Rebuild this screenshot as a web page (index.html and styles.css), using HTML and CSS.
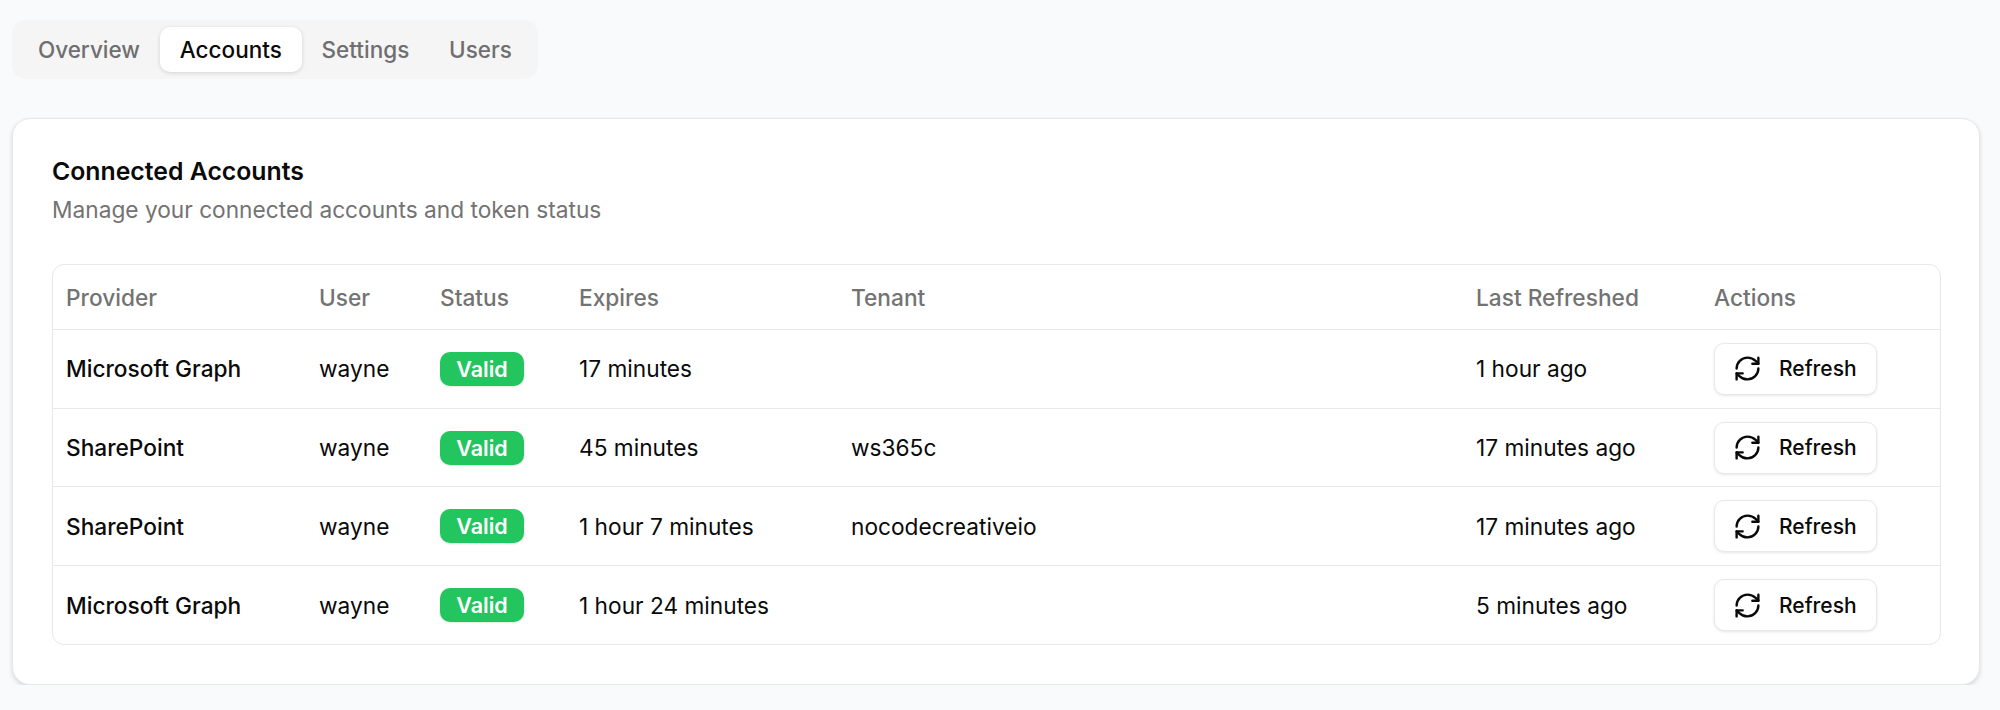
FILE: index.html
```html
<!DOCTYPE html>
<html>

<head>
    <link rel="stylesheet" href="styles.css">

    <title>
        Connected Accounts
    </title>
</head>

<body>

    <div class="page">
        <nav class="tabs">
            <a class="tab">Overview</a>
            <a class="tab tab_active">Accounts</a>
            <a class="tab">Settings</a>
            <a class="tab">Users</a>
        </nav>

        <section class="card">
            <h2 class="card_title">Connected Accounts</h2>
            <p class="card_subtitle">Manage your connected accounts and token status</p>

            <div class="table_wrap">
                <table>
                    <colgroup>
                        <col class="col_provider">
                        <col class="col_user">
                        <col class="col_status">
                        <col class="col_expires">
                        <col class="col_tenant">
                        <col class="col_refreshed">
                        <col class="col_actions">
                    </colgroup>
                    <tr>
                        <th>Provider</th>
                        <th>User</th>
                        <th>Status</th>
                        <th>Expires</th>
                        <th>Tenant</th>
                        <th>Last Refreshed</th>
                        <th>Actions</th>
                    </tr>
                    <tr>
                        <td class="provider">Microsoft Graph</td>
                        <td>wayne</td>
                        <td><span class="badge">Valid</span></td>
                        <td>17 minutes</td>
                        <td></td>
                        <td>1 hour ago</td>
                        <td>
                            <button class="refresh_button">
                                <svg class="refresh_icon" viewBox="0 0 24 24"><path d="M3 12a9 9 0 0 1 9-9 9.75 9.75 0 0 1 6.74 2.74L21 8"/><path d="M21 3v5h-5"/><path d="M21 12a9 9 0 0 1-9 9 9.75 9.75 0 0 1-6.74-2.74L3 16"/><path d="M8 16H3v5"/></svg>
                                Refresh
                            </button>
                        </td>
                    </tr>
                    <tr>
                        <td class="provider">SharePoint</td>
                        <td>wayne</td>
                        <td><span class="badge">Valid</span></td>
                        <td>45 minutes</td>
                        <td>ws365c</td>
                        <td>17 minutes ago</td>
                        <td>
                            <button class="refresh_button">
                                <svg class="refresh_icon" viewBox="0 0 24 24"><path d="M3 12a9 9 0 0 1 9-9 9.75 9.75 0 0 1 6.74 2.74L21 8"/><path d="M21 3v5h-5"/><path d="M21 12a9 9 0 0 1-9 9 9.75 9.75 0 0 1-6.74-2.74L3 16"/><path d="M8 16H3v5"/></svg>
                                Refresh
                            </button>
                        </td>
                    </tr>
                    <tr>
                        <td class="provider">SharePoint</td>
                        <td>wayne</td>
                        <td><span class="badge">Valid</span></td>
                        <td>1 hour 7 minutes</td>
                        <td>nocodecreativeio</td>
                        <td>17 minutes ago</td>
                        <td>
                            <button class="refresh_button">
                                <svg class="refresh_icon" viewBox="0 0 24 24"><path d="M3 12a9 9 0 0 1 9-9 9.75 9.75 0 0 1 6.74 2.74L21 8"/><path d="M21 3v5h-5"/><path d="M21 12a9 9 0 0 1-9 9 9.75 9.75 0 0 1-6.74-2.74L3 16"/><path d="M8 16H3v5"/></svg>
                                Refresh
                            </button>
                        </td>
                    </tr>
                    <tr>
                        <td class="provider">Microsoft Graph</td>
                        <td>wayne</td>
                        <td><span class="badge">Valid</span></td>
                        <td>1 hour 24 minutes</td>
                        <td></td>
                        <td>5 minutes ago</td>
                        <td>
                            <button class="refresh_button">
                                <svg class="refresh_icon" viewBox="0 0 24 24"><path d="M3 12a9 9 0 0 1 9-9 9.75 9.75 0 0 1 6.74 2.74L21 8"/><path d="M21 3v5h-5"/><path d="M21 12a9 9 0 0 1-9 9 9.75 9.75 0 0 1-6.74-2.74L3 16"/><path d="M8 16H3v5"/></svg>
                                Refresh
                            </button>
                        </td>
                    </tr>
                </table>
            </div>
        </section>
    </div>

</body>

</html>
```

FILE: styles.css
```css
* {
    box-sizing: border-box;
}

body {
    margin: 0;
    background: #f9fafb;
    color: #0a0a0a;
    font-family: Inter, "Noto Sans", sans-serif;
    font-size: 22.7px;
}

.page {
    display: flex;
    flex-direction: column;
    gap: 39px;
    padding: 20px 20px 0 12px;
}

.tabs {
    display: flex;
    align-self: flex-start;
    padding: 7px 6px;
    border-radius: 14px;
    background: #f5f5f5;
}

.tab {
    padding: 0 19.9px;
    height: 45px;
    line-height: 45px;
    border-radius: 10px;
    color: #6f6f6f;
    font-size: 22.5px;
    font-weight: 500;
}

.tab_active {
    background: #ffffff;
    color: #0a0a0a;
    box-shadow: 0 1px 4px rgba(0, 0, 0, 0.14);
}

.card {
    height: 567px;
    padding: 34px 38px 0 39px;
    border: 1px solid #e8e8e8;
    border-radius: 18px;
    background: #ffffff;
    box-shadow: 0 2px 4px rgba(0, 0, 0, 0.14);
}

.card_title {
    margin: 0;
    font-size: 24.8px;
    line-height: 36px;
    font-weight: 600;
}

.card_subtitle {
    margin: 3px 0 0 0;
    color: #737373;
    line-height: 36px;
}

.table_wrap {
    margin-top: 36px;
    border: 1px solid #e8e8e8;
    border-radius: 12px;
    overflow: hidden;
}

table {
    width: 100%;
    table-layout: fixed;
    border-collapse: collapse;
}

.col_provider {
    width: 253px;
}

.col_user {
    width: 121px;
}

.col_status {
    width: 139px;
}

.col_expires {
    width: 272px;
}

.col_tenant {
    width: 625px;
}

.col_refreshed {
    width: 238px;
}

th,
td {
    padding: 0 13px;
    text-align: left;
}

th {
    height: 64.5px;
    color: #737373;
    font-weight: 500;
}

td {
    height: 78.7px;
    border-top: 1px solid #e8e8e8;
}

.provider {
    font-weight: 500;
}

.badge {
    display: inline-block;
    width: 84px;
    height: 34px;
    line-height: 34px;
    border-radius: 10px;
    background: #22c55e;
    color: #ffffff;
    font-size: 21.5px;
    font-weight: 600;
    text-align: center;
    vertical-align: middle;
    box-shadow: 0 1px 2px rgba(0, 0, 0, 0.1);
}

.refresh_button {
    display: flex;
    align-items: center;
    gap: 17px;
    width: 163px;
    height: 52px;
    padding: 0 18px;
    border: 1px solid #e8e8e8;
    border-radius: 10px;
    background: #ffffff;
    color: #0a0a0a;
    font-family: inherit;
    font-size: 21px;
    font-weight: 500;
    box-shadow: 0 1px 3px rgba(0, 0, 0, 0.1);
}

.refresh_icon {
    flex-shrink: 0;
    width: 29px;
    height: 29px;
    fill: none;
    stroke: currentColor;
    stroke-width: 2;
    stroke-linecap: round;
    stroke-linejoin: round;
}
```
